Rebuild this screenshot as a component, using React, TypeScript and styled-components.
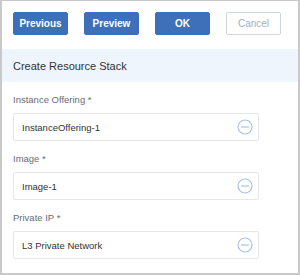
import React from "react";
import styled, { createGlobalStyle } from "styled-components";

const GlobalStyle = createGlobalStyle`
  html, body {
    margin: 0;
    padding: 0;
    background: #ffffff;
  }
  body {
    font-family: "Liberation Sans", Arial, sans-serif;
  }
`;

const Root = styled.div`
  width: 300px;
  height: 275px;
  box-sizing: border-box;
  border-style: solid;
  border-color: #c9c9c9;
  border-width: 1px 2px 2px 2px;
  background: #fff;
  overflow: hidden;
`;

const Toolbar = styled.div`
  display: grid;
  grid-template-columns: repeat(4, 55px);
  column-gap: 16px;
  padding: 11px 0 0 11px;
`;

const Button = styled.button<{ $ghost?: boolean }>`
  height: 23px;
  padding: 0;
  border-radius: 2px;
  font-family: "Liberation Sans", Arial, sans-serif;
  font-size: 10px;
  font-weight: ${(p) => (p.$ghost ? "normal" : "bold")};
  color: ${(p) => (p.$ghost ? "#a7aebc" : "#ffffff")};
  background: ${(p) => (p.$ghost ? "#ffffff" : "#3d70b8")};
  border: 1px solid ${(p) => (p.$ghost ? "#d0d5df" : "#3d70b8")};
  outline: none;
  cursor: pointer;
`;

const Header = styled.div`
  margin-top: 14px;
  height: 33px;
  display: flex;
  align-items: center;
  padding-left: 11px;
  background: #eef5fd;
  color: #333;
  font-size: 11px;
`;

const Form = styled.div`
  display: flex;
  flex-direction: column;
  gap: 11px;
  padding: 11px 0 0 11px;
`;

const Field = styled.div`
  display: flex;
  flex-direction: column;
  gap: 6px;
`;

const Label = styled.label`
  font-size: 9.5px;
  line-height: 14px;
  color: #676d76;
`;

const Input = styled.div`
  width: 246px;
  height: 28px;
  box-sizing: border-box;
  border: 1px solid #e4e7ee;
  border-radius: 2px;
  display: flex;
  align-items: center;
  justify-content: space-between;
  padding: 0 5px 0 8px;
  font-size: 9.5px;
  color: #333;
`;

const RemoveIcon = () => (
  <svg width="16" height="16" viewBox="0 0 16 16">
    <circle cx="8" cy="8" r="7" fill="none" stroke="#a8c3e8" strokeWidth="1.2" />
    <line x1="4" y1="8" x2="12" y2="8" stroke="#a8c3e8" strokeWidth="1.2" />
  </svg>
);

const fields = [
  { label: "Instance Offering *", value: "InstanceOffering-1" },
  { label: "Image *", value: "Image-1" },
  { label: "Private IP *", value: "L3 Private Network" },
];

export default function App() {
  return (
    <>
      <GlobalStyle />
      <Root>
        <Toolbar>
          <Button>Previous</Button>
          <Button>Preview</Button>
          <Button>OK</Button>
          <Button $ghost>Cancel</Button>
        </Toolbar>
        <Header>Create Resource Stack</Header>
        <Form>
          {fields.map((f) => (
            <Field key={f.label}>
              <Label>{f.label}</Label>
              <Input>
                <span>{f.value}</span>
                <RemoveIcon />
              </Input>
            </Field>
          ))}
        </Form>
      </Root>
    </>
  );
}
